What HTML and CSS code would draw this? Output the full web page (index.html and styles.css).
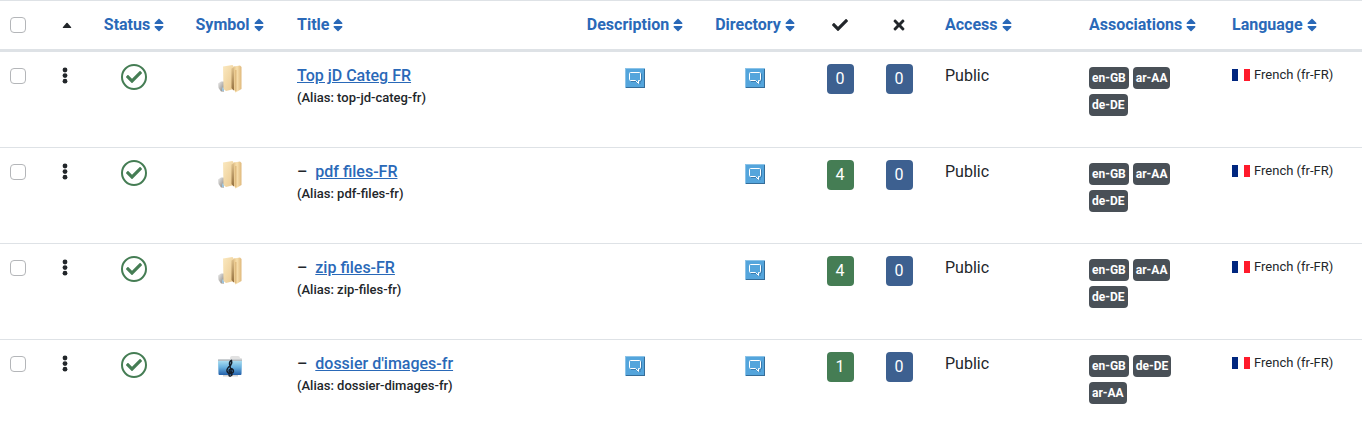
FILE: index.html
```html
<!DOCTYPE html>
<html lang="en">
<head>
<meta charset="utf-8">
<title>Categories</title>
<link rel="stylesheet" href="styles.css">
</head>
<body>
<svg class="sprite" aria-hidden="true">
  <defs>
    <linearGradient id="fold-a" x1="0" y1="0" x2="1" y2="1"><stop offset="0" stop-color="#fbe9c0"/><stop offset="1" stop-color="#e9c78d"/></linearGradient>
    <linearGradient id="fold-b" x1="0" y1="0" x2="1" y2="0"><stop offset="0" stop-color="#e8c78c"/><stop offset=".4" stop-color="#f8e0ae"/><stop offset="1" stop-color="#dfb87b"/></linearGradient>
    <linearGradient id="fold-c" x1="0" y1="0" x2="1" y2="1"><stop offset="0" stop-color="#f0f0f0"/><stop offset="1" stop-color="#85817c"/></linearGradient>
    <linearGradient id="fold-d" x1="0" y1="0" x2="0" y2="1"><stop offset="0" stop-color="#e2c48f"/><stop offset="1" stop-color="#94703f"/></linearGradient>
    <linearGradient id="music-a" x1="0" y1="0" x2="0" y2="1"><stop offset="0" stop-color="#a8dcf0"/><stop offset=".45" stop-color="#69b1df"/><stop offset="1" stop-color="#235fa9"/></linearGradient>
  </defs>
  <symbol id="sort" viewBox="0 0 320 512"><path fill="currentColor" d="M41 288h238c21.4 0 32.1 25.9 17 41L177 448c-9.4 9.4-24.6 9.4-33.9 0L24 329c-15.1-15.1-4.4-41 17-41zm255-105L177 64c-9.4-9.4-24.6-9.4-33.9 0L24 183c-15.1 15.1-4.4 41 17 41h238c21.4 0 32.1-25.9 17-41z"/></symbol>
  <symbol id="caret" viewBox="0 0 10 16"><path fill="currentColor" d="M.8 10.2 4.4 6.1Q5 5.5 5.6 6.1L9.2 10.2Q9.5 11 8.8 11H1.2Q.5 11 .8 10.2z"/></symbol>
  <symbol id="check" viewBox="0 0 512 512"><path fill="currentColor" d="M173.898 439.404l-166.4-166.4c-9.997-9.997-9.997-26.206 0-36.204l36.203-36.204c9.997-9.998 26.207-9.998 36.204 0L192 312.69 432.095 72.596c9.997-9.997 26.207-9.997 36.204 0l36.203 36.204c9.997 9.997 9.997 26.206 0 36.204l-294.4 294.401c-9.998 9.997-26.207 9.997-36.204-.001z"/></symbol>
  <symbol id="times" viewBox="0 0 352 512"><path fill="currentColor" d="M242.72 256l100.07-100.07c12.28-12.28 12.28-32.19 0-44.48l-22.24-22.24c-12.28-12.28-32.19-12.28-44.48 0L176 189.28 75.93 89.21c-12.28-12.28-32.19-12.28-44.48 0L9.21 111.45c-12.28 12.28-12.28 32.19 0 44.48L109.28 256 9.21 356.07c-12.28 12.28-12.28 32.19 0 44.48l22.24 22.24c12.28 12.28 32.2 12.28 44.48 0L176 322.72l100.07 100.07c12.28 12.28 32.2 12.28 44.48 0l22.24-22.24c12.28-12.28 12.28-32.19 0-44.48L242.72 256z"/></symbol>
  <symbol id="dots" viewBox="0 0 6 18"><g fill="currentColor"><circle cx="3" cy="3" r="2.4"/><circle cx="3" cy="8.6" r="2.4"/><circle cx="3" cy="14.2" r="2.4"/></g></symbol>
  <symbol id="folder" viewBox="0 0 26 30">
    <path fill="url(#fold-c)" d="M1 19.500 4 17.500h3v10H4L1.500 24z"/>
    <path fill="#9cc3dd" d="M5 23.500h2v3.500H5z"/>
    <path fill="url(#fold-a)" d="M6 2.500 15.500 1 17 3v22l-8 2-2.500-2z"/>
    <path fill="url(#fold-d)" d="M14.500 4.500 18 2.500v22l-1.500 2-2-2.500z"/>
    <path fill="url(#fold-b)" d="M17 2.500 23 1.500 24.500 3v22l-6 3.500-1.500-3z"/>
    <path fill="#d2a768" d="M18.500 6h.8v21h-.8z"/>
  </symbol>
  <symbol id="music" viewBox="0 0 26 30">
    <path fill="#e2e2e2" d="M13 6q0-2 2-2h6q2 0 2 2h1q1 0 1 1v3H1V8q0-1 1-1h11z"/>
    <path fill="#b5bdc3" d="M1 7.500h24v2H1z"/>
    <path fill="url(#music-a)" d="M1 9h24l-.5 13q0 1-1 1h-21q-1 0-1-1z"/>
    <path fill="#d3d3d3" d="M6 23h15v1.500H6z"/>
    <path fill="none" stroke="#131c28" stroke-width="1.500" stroke-linecap="round" d="M14.500 23.500q-2 1.500-2.500-.5m3 0L12.500 12q0-3 2-3.500 1 2.500-1 5-4 3-3.500 5.500.8 3 4.200 2.500 3-1 2-3.500-1.500-2-3.700-.5-1 1.500.5 2.500"/>
  </symbol>
  <symbol id="note" viewBox="0 0 20 20">
    <path fill="#54a5dc" d="M0 0h20v20H0z"/>
    <path fill="#8bc3e8" d="M0 0h20v1H1v19H0z"/>
    <path fill="#356d99" d="M19 1h1v19H1v-1h18z"/>
    <path fill="none" stroke="#3a7bad" d="M6 13.500h5.500l2 2.500M16.500 5.500V12q0 1.500-1.500 1.500V16"/>
    <path fill="none" stroke="#fff" d="M5.500 4.500h9q1 0 1 1v6q0 1-1 1h-1v3l-3-3h-5q-1 0-1-1v-6q0-1 1-1z"/>
  </symbol>
  <symbol id="flag" viewBox="0 0 18 12"><path fill="#00267f" d="M0 0h6v12H0z"/><path fill="#fff" d="M6 0h6v12H6z"/><path fill="#ff1a2b" d="M12 0h6v12h-6z"/></symbol>
</svg>

<table class="list">
  <colgroup>
    <col class="col-select"><col class="col-order"><col class="col-status"><col class="col-symbol"><col class="col-title"><col class="col-description"><col class="col-directory"><col class="col-published"><col class="col-unpublished"><col class="col-access"><col class="col-associations"><col class="col-language">
  </colgroup>
  <thead>
    <tr>
      <th class="center"><input class="tick" type="checkbox" aria-label="Select all"></th>
      <th class="center"><button class="bare" type="button" aria-label="Ordering"><svg class="icon-sort"><use href="#caret"/></svg></button></th>
      <th class="center"><a class="sort" href="#">Status<svg class="icon-sort"><use href="#sort"/></svg></a></th>
      <th class="center"><a class="sort" href="#">Symbol<svg class="icon-sort"><use href="#sort"/></svg></a></th>
      <th><a class="sort" href="#">Title<svg class="icon-sort"><use href="#sort"/></svg></a></th>
      <th class="center"><a class="sort" href="#">Description<svg class="icon-sort"><use href="#sort"/></svg></a></th>
      <th class="center"><a class="sort" href="#">Directory<svg class="icon-sort"><use href="#sort"/></svg></a></th>
      <th class="center" aria-label="Published"><svg class="icon-head"><use href="#check"/></svg></th>
      <th class="center" aria-label="Unpublished"><svg class="icon-head"><use href="#times"/></svg></th>
      <th><a class="sort" href="#">Access<svg class="icon-sort"><use href="#sort"/></svg></a></th>
      <th><a class="sort" href="#">Associations<svg class="icon-sort"><use href="#sort"/></svg></a></th>
      <th><a class="sort" href="#">Language<svg class="icon-sort"><use href="#sort"/></svg></a></th>
    </tr>
  </thead>
  <tbody>
    <tr>
      <td class="center"><input class="tick" type="checkbox" aria-label="Select Top jD Categ FR"></td>
      <td class="order"><svg class="icon-dots"><use href="#dots"/></svg></td>
      <td class="center"><button class="state" type="button" aria-label="Published"><svg class="icon-state"><use href="#check"/></svg></button></td>
      <td class="center"><svg class="icon-folder"><use href="#folder"/></svg></td>
      <td><div class="name"><a href="#">Top jD Categ FR</a></div><div class="alias">(Alias: top-jd-categ-fr)</div></td>
      <td class="center"><svg class="icon-note"><use href="#note"/></svg></td>
      <td class="center"><svg class="icon-note"><use href="#note"/></svg></td>
      <td class="center"><a class="count" href="#">0</a></td>
      <td class="center"><a class="count" href="#">0</a></td>
      <td>Public</td>
      <td class="associations"><div class="badges"><a class="badge" href="#">en-GB</a><a class="badge" href="#">ar-AA</a><a class="badge" href="#">de-DE</a></div></td>
      <td><div class="language"><svg class="icon-flag"><use href="#flag"/></svg>French (fr-FR)</div></td>
    </tr>
    <tr>
      <td class="center"><input class="tick" type="checkbox" aria-label="Select pdf files-FR"></td>
      <td class="order"><svg class="icon-dots"><use href="#dots"/></svg></td>
      <td class="center"><button class="state" type="button" aria-label="Published"><svg class="icon-state"><use href="#check"/></svg></button></td>
      <td class="center"><svg class="icon-folder"><use href="#folder"/></svg></td>
      <td><div class="name"><span class="level">–</span><a href="#">pdf files-FR</a></div><div class="alias">(Alias: pdf-files-fr)</div></td>
      <td></td>
      <td class="center"><svg class="icon-note"><use href="#note"/></svg></td>
      <td class="center"><a class="count has-items" href="#">4</a></td>
      <td class="center"><a class="count" href="#">0</a></td>
      <td>Public</td>
      <td class="associations"><div class="badges"><a class="badge" href="#">en-GB</a><a class="badge" href="#">ar-AA</a><a class="badge" href="#">de-DE</a></div></td>
      <td><div class="language"><svg class="icon-flag"><use href="#flag"/></svg>French (fr-FR)</div></td>
    </tr>
    <tr>
      <td class="center"><input class="tick" type="checkbox" aria-label="Select zip files-FR"></td>
      <td class="order"><svg class="icon-dots"><use href="#dots"/></svg></td>
      <td class="center"><button class="state" type="button" aria-label="Published"><svg class="icon-state"><use href="#check"/></svg></button></td>
      <td class="center"><svg class="icon-folder"><use href="#folder"/></svg></td>
      <td><div class="name"><span class="level">–</span><a href="#">zip files-FR</a></div><div class="alias">(Alias: zip-files-fr)</div></td>
      <td></td>
      <td class="center"><svg class="icon-note"><use href="#note"/></svg></td>
      <td class="center"><a class="count has-items" href="#">4</a></td>
      <td class="center"><a class="count" href="#">0</a></td>
      <td>Public</td>
      <td class="associations"><div class="badges"><a class="badge" href="#">en-GB</a><a class="badge" href="#">ar-AA</a><a class="badge" href="#">de-DE</a></div></td>
      <td><div class="language"><svg class="icon-flag"><use href="#flag"/></svg>French (fr-FR)</div></td>
    </tr>
    <tr>
      <td class="center"><input class="tick" type="checkbox" aria-label="Select dossier d'images-fr"></td>
      <td class="order"><svg class="icon-dots"><use href="#dots"/></svg></td>
      <td class="center"><button class="state" type="button" aria-label="Published"><svg class="icon-state"><use href="#check"/></svg></button></td>
      <td class="center"><svg class="icon-folder"><use href="#music"/></svg></td>
      <td><div class="name"><span class="level">–</span><a href="#">dossier d'images-fr</a></div><div class="alias">(Alias: dossier-dimages-fr)</div></td>
      <td class="center"><svg class="icon-note"><use href="#note"/></svg></td>
      <td class="center"><svg class="icon-note"><use href="#note"/></svg></td>
      <td class="center"><a class="count has-items" href="#">1</a></td>
      <td class="center"><a class="count" href="#">0</a></td>
      <td>Public</td>
      <td class="associations"><div class="badges"><a class="badge" href="#">en-GB</a><a class="badge" href="#">de-DE</a><a class="badge" href="#">ar-AA</a></div></td>
      <td><div class="language"><svg class="icon-flag"><use href="#flag"/></svg>French (fr-FR)</div></td>
    </tr>
  </tbody>
</table>
</body>
</html>
```

FILE: styles.css
```css
* {
  box-sizing: border-box;
}

html {
  scrollbar-width: none;
}

body {
  margin: 0;
  background: #fff;
  color: #22262a;
  font: 16px/24px Roboto, "Liberation Sans", sans-serif;
}

a {
  color: #2a69b8;
}

.sprite {
  display: block;
  width: 0;
  height: 0;
}

.list {
  width: 100%;
  table-layout: fixed;
  border-collapse: separate;
  border-spacing: 0;
  border-top: 1px solid #dee2e6;
}

.col-select { width: 36px; }
.col-order { width: 62px; }
.col-status { width: 72px; }
.col-symbol { width: 119px; }
.col-description { width: 112px; }
.col-directory { width: 128px; }
.col-published { width: 42px; }
.col-unpublished { width: 76px; }
.col-access { width: 144px; }
.col-associations { width: 143px; }
.col-language { width: 138px; }

th,
td {
  padding: 12px 8px;
  text-align: left;
  vertical-align: top;
}

th {
  border-bottom: 3px solid #dee2e6;
  font-weight: 700;
  white-space: nowrap;
}

td {
  height: 96px;
  border-bottom: 1px solid #dee2e6;
}

.center {
  padding-right: 4px;
  padding-left: 4px;
  text-align: center;
}

th svg,
td svg {
  vertical-align: top;
}

.sort {
  display: inline-flex;
  align-items: center;
  gap: 4px;
  text-decoration: none;
  vertical-align: top;
}

.icon-sort {
  width: 10px;
  height: 16px;
}

.icon-head {
  width: 16px;
  height: 16px;
  margin: 4px 0;
}

.bare {
  display: inline-flex;
  align-items: center;
  height: 24px;
  padding: 0;
  border: 0;
  background: none;
  color: #22262a;
  vertical-align: top;
}

.tick {
  appearance: none;
  width: 16px;
  height: 16px;
  margin: 4px 0;
  border: 1px solid #b4b6b9;
  border-radius: 4px;
  background: #fff;
  vertical-align: top;
}

.tick:checked {
  background: #2a69b8;
}

.order {
  padding-left: 26px;
}

.icon-dots {
  width: 6px;
  height: 18px;
  margin-top: 3px;
}

.state {
  display: inline-flex;
  align-items: center;
  justify-content: center;
  width: 26px;
  height: 26px;
  padding: 0;
  border: 2px solid #457d54;
  border-radius: 50%;
  background: #fff;
  color: #457d54;
  vertical-align: top;
}

.icon-state {
  width: 16px;
  height: 16px;
}

.icon-folder {
  width: 26px;
  height: 30px;
}

.icon-note {
  width: 20px;
  height: 20px;
  margin-top: 4px;
}

.name {
  font-weight: 500;
}

.level {
  margin-right: 8px;
}

.alias {
  font-size: 13px;
  font-weight: 500;
  line-height: 20px;
}

.count {
  display: inline-block;
  padding: 3px 9px;
  border-radius: 4px;
  background: #3d6090;
  color: #fff;
  text-decoration: none;
  vertical-align: top;
}

.has-items {
  background: #457d54;
}

.associations {
  padding-right: 40px;
}

.badges {
  display: flex;
  flex-wrap: wrap;
  gap: 5px 4px;
  padding-top: 3px;
}

.badge {
  padding: 0 3px;
  border-radius: 4px;
  background: #495057;
  color: #fff;
  font-size: 12px;
  font-weight: 700;
  line-height: 22px;
  text-decoration: none;
}

.language {
  display: flex;
  align-items: center;
  gap: 4px;
  font-size: 13px;
  line-height: 22px;
}

.icon-flag {
  width: 18px;
  height: 12px;
}
```
